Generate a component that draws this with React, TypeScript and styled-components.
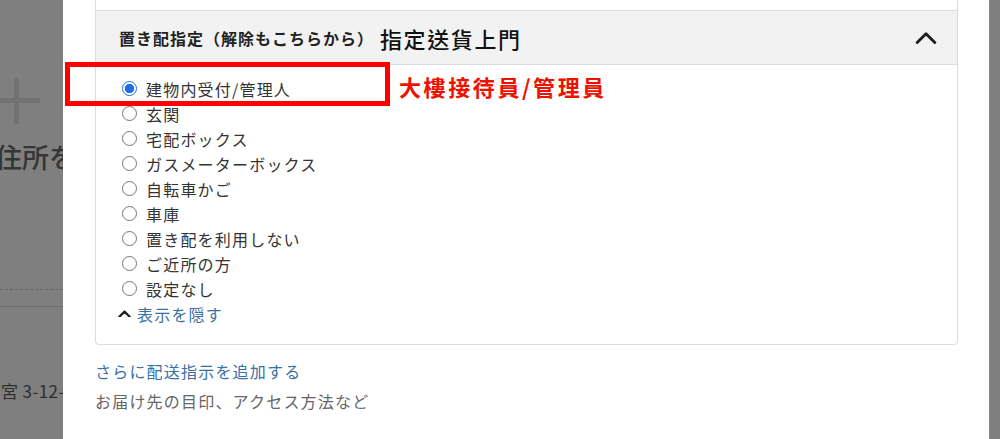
import React from "react";
import styled, { createGlobalStyle } from "styled-components";

const GlobalStyle = createGlobalStyle`
  html, body {
    margin: 0;
    padding: 0;
  }
  body {
    font-family: "Noto Sans CJK JP", "Noto Sans", sans-serif;
    background: #7f7f7f;
  }
`;

const Screen = styled.div`
  position: relative;
  width: 1000px;
  height: 439px;
  overflow: hidden;
  background: #7f7f7f;
`;

/* page dimmed behind the dialog */
const Underlay = styled.div`
  display: flex;
  flex-direction: column;
  padding-top: 78px;
  width: 200px;
`;

const PlusMark = styled.svg`
  display: block;
  margin-left: -6px;
`;

const PageHeading = styled.div`
  margin: 17px 0 0 -5px;
  font-size: 27px;
  line-height: 32px;
  font-weight: 500;
  color: #353535;
  white-space: nowrap;
`;

const DashedRule = styled.div`
  margin-top: 116px;
  border-top: 1px dashed #666;
`;

const SolidRule = styled.div`
  margin-top: 16px;
  border-top: 1px solid #6c6c6c;
`;

const AddressText = styled.div`
  margin: 74px 0 0 1px;
  font-size: 17px;
  line-height: 20px;
  letter-spacing: 0.4px;
  color: #2e2e2e;
  white-space: nowrap;
`;

const Dialog = styled.div`
  position: absolute;
  top: 0;
  left: 63px;
  width: 927px;
  bottom: 0;
  background: #fff;
  padding: 0 31px 0 32px;
  box-sizing: border-box;
  border-right: 1px solid #8a8a8a;
`;

const Box = styled.div`
  margin-top: -1px;
  border: 1px solid #dcdcdc;
  border-radius: 0 0 4px 4px;
`;

const TopFiller = styled.div`
  height: 10px;
`;

const Header = styled.div`
  display: flex;
  align-items: center;
  justify-content: space-between;
  box-sizing: border-box;
  height: 55px;
  padding: 0 20px 0 23px;
  background: #f2f2f2;
  border-top: 1px solid #dcdcdc;
  border-bottom: 1px solid #dcdcdc;
`;

const TitleGroup = styled.div`
  display: flex;
  align-items: center;
  gap: 6px;
`;

const Title = styled.span`
  font-size: 16px;
  font-weight: 700;
  color: #222;
  letter-spacing: 1px;
`;

const TitleNote = styled.span`
  font-family: "Noto Sans CJK TC", "Noto Sans CJK JP", sans-serif;
  font-size: 22px;
  font-weight: 500;
  color: #111;
  letter-spacing: 1.6px;
`;

const OptionList = styled.div`
  display: flex;
  flex-direction: column;
  padding: 11px 0 18px 26px;
`;

const OptionRow = styled.label`
  display: flex;
  align-items: center;
  gap: 9px;
  height: 25px;
  font-size: 16px;
  color: #333;
  letter-spacing: 1.2px;
`;

const RadioDot = styled.span<{ $checked?: boolean }>`
  flex: none;
  width: 15px;
  height: 15px;
  box-sizing: border-box;
  border-radius: 50%;
  border: 1.3px solid ${(p) => (p.$checked ? "#1f6fe8" : "#767676")};
  background: ${(p) =>
    p.$checked
      ? "radial-gradient(circle, #1f6fe8 0 4.4px, #fff 5px)"
      : "#fff"};
`;

const ToggleRow = styled.div`
  display: flex;
  align-items: center;
  gap: 6px;
  height: 25px;
  margin-left: -4px;
  font-size: 16px;
  letter-spacing: 1.2px;
  color: #3b6fa6;
`;

const LinkText = styled.div`
  margin-top: 11px;
  font-size: 16px;
  line-height: 30px;
  letter-spacing: 1.2px;
  color: #3b6fa6;
`;

const HintText = styled.div`
  font-size: 16px;
  line-height: 30px;
  letter-spacing: 1.2px;
  color: #666;
`;

/* red annotation drawn over the first option */
const Annotation = styled.div`
  position: absolute;
  left: 2px;
  top: 62px;
  display: flex;
  align-items: center;
  gap: 9px;
`;

const RedFrame = styled.div`
  width: 325px;
  height: 44px;
  box-sizing: border-box;
  border: 5px solid #f00;
`;

const RedLabel = styled.span`
  padding-top: 3px;
  font-family: "Noto Sans CJK TC", "Noto Sans CJK JP", sans-serif;
  font-size: 22px;
  font-weight: 700;
  color: #ee1100;
  letter-spacing: 2.6px;
`;

const ChevronUp = ({ size, width }: { size: number; width: number }) => (
  <svg width={size} height={size * 0.6} viewBox="0 0 20 12">
    <polyline
      points="2,10.5 10,2.5 18,10.5"
      fill="none"
      stroke="#1e1e1e"
      strokeWidth={width}
      strokeLinecap="round"
      strokeLinejoin="round"
    />
  </svg>
);

const options = [
  "建物内受付/管理人",
  "玄関",
  "宅配ボックス",
  "ガスメーターボックス",
  "自転車かご",
  "車庫",
  "置き配を利用しない",
  "ご近所の方",
  "設定なし",
];

export default function App() {
  return (
    <Screen>
      <GlobalStyle />
      <Underlay>
        <PlusMark width="46" height="46" viewBox="0 0 46 46">
          <rect x="0" y="20" width="46" height="5" fill="#727272" />
          <rect x="20" y="0" width="5" height="46" fill="#727272" />
        </PlusMark>
        <PageHeading>住所を追加</PageHeading>
        <DashedRule />
        <SolidRule />
        <AddressText>宮 3-12-1</AddressText>
      </Underlay>

      <Dialog>
        <Box>
          <TopFiller />
          <Header>
            <TitleGroup>
              <Title>置き配指定（解除もこちらから）</Title>
              <TitleNote>指定送貨上門</TitleNote>
            </TitleGroup>
            <ChevronUp size={22} width={2.6} />
          </Header>
          <OptionList>
            {options.map((o, i) => (
              <OptionRow key={o}>
                <RadioDot $checked={i === 0} />
                {o}
              </OptionRow>
            ))}
            <ToggleRow>
              <ChevronUp size={13} width={3.4} />
              表示を隠す
            </ToggleRow>
          </OptionList>
        </Box>
        <LinkText>さらに配送指示を追加する</LinkText>
        <HintText>お届け先の目印、アクセス方法など</HintText>

        <Annotation>
          <RedFrame />
          <RedLabel>大樓接待員/管理員</RedLabel>
        </Annotation>
      </Dialog>
    </Screen>
  );
}
